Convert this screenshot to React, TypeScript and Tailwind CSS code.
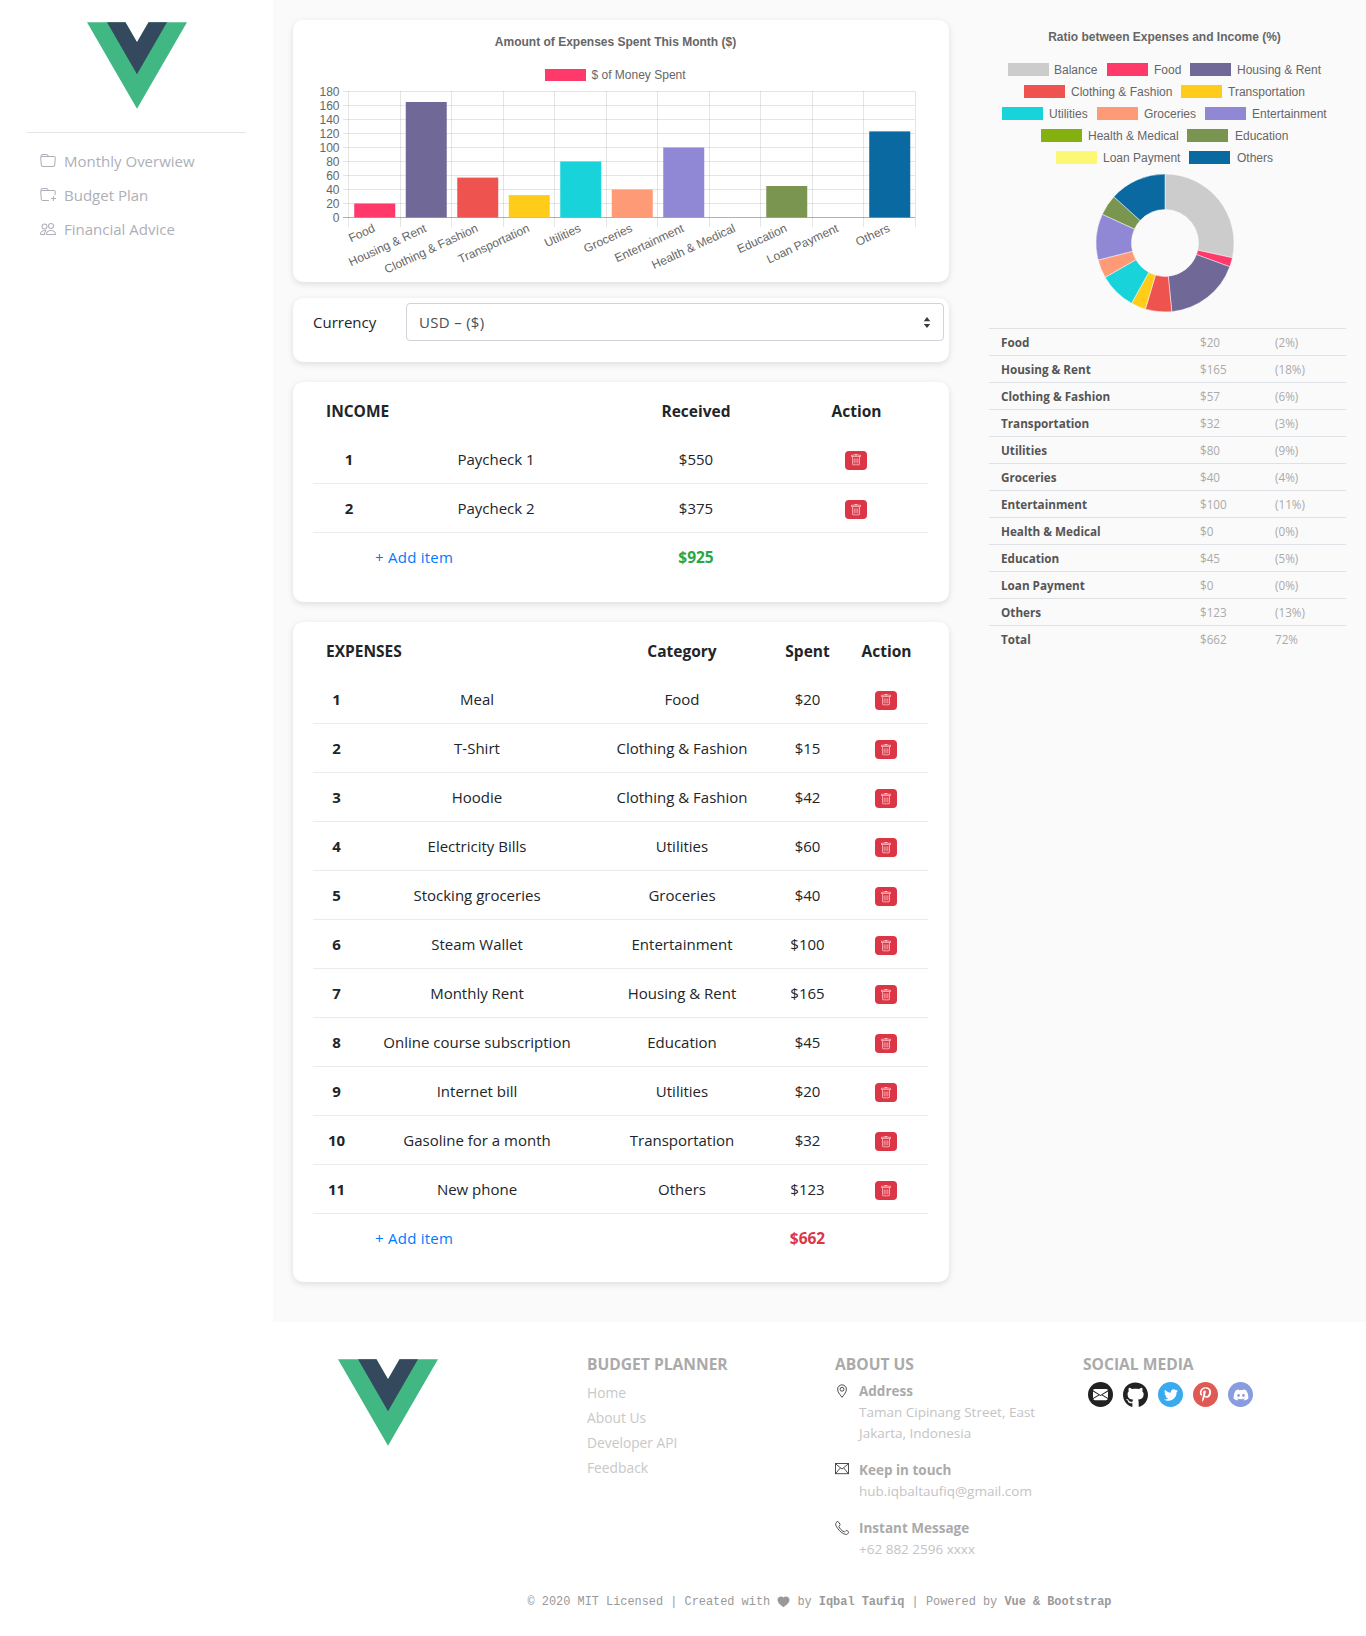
import React from "react";
import { BsFolder, BsFolderPlus, BsPeople, BsTrash, BsEnvelopeFill } from "react-icons/bs";
import { FaGithub, FaTwitter, FaPinterestP, FaDiscord } from "react-icons/fa";

const C = {
  balance: "#cccccc",
  food: "#ff3a6b",
  housing: "#706897",
  clothing: "#ef5350",
  transport: "#ffcd19",
  util: "#19d3da",
  groc: "#ff9a76",
  ent: "#9088d4",
  health: "#84b010",
  edu: "#7a9550",
  loan: "#fcf876",
  others: "#0a69a0",
};

function VueLogo() {
  return (
    <svg viewBox="0 0 261.76 226.69" className="block h-[87px] w-[100px]">
      <path d="M161.096.001l-30.225 52.351L100.647.001H-.005l130.877 226.688L261.749.001z" fill="#41b883" />
      <path d="M161.096.001l-30.225 52.351L100.647.001H52.346l78.526 136.01L209.398.001z" fill="#34495e" />
    </svg>
  );
}

const barData: [string, number, string][] = [
  ["Food", 20, C.food],
  ["Housing & Rent", 165, C.housing],
  ["Clothing & Fashion", 57, C.clothing],
  ["Transportation", 32, C.transport],
  ["Utilities", 80, C.util],
  ["Groceries", 40, C.groc],
  ["Entertainment", 100, C.ent],
  ["Health & Medical", 0, C.health],
  ["Education", 45, C.edu],
  ["Loan Payment", 0, C.loan],
  ["Others", 123, C.others],
];

function BarChart() {
  const x0 = 348;
  const step = 51.5;
  const y0 = 217.5;
  const ticks = [0, 20, 40, 60, 80, 100, 120, 140, 160, 180];
  return (
    <svg viewBox="293 20 656 262" className="block h-[262px] w-[656px] font-['Liberation_Sans',Arial,sans-serif]">
      <text x="615.500" y="46" textAnchor="middle" fontSize="12" fontWeight="700" fill="#666">
        Amount of Expenses Spent This Month ($)
      </text>
      <rect x="545" y="69" width="41" height="12" fill={C.food} />
      <text x="591.500" y="79" fontSize="12" fill="#666">$ of Money Spent</text>
      {ticks.map((t) => {
        const y = y0 - (t / 20) * 14;
        return (
          <g key={t}>
            <line x1={343} x2={915} y1={y} y2={y} stroke={t === 0 ? "rgba(0,0,0,.3)" : "rgba(0,0,0,.1)"} />
            <text x="339.500" y={y + 4} textAnchor="end" fontSize="12" fill="#666">{t}</text>
          </g>
        );
      })}
      {Array.from({ length: 12 }).map((_, i) => {
        const x = Math.round(x0 + i * step) + 0.5;
        return <line key={i} x1={x} x2={x} y1={91} y2={227} stroke="rgba(0,0,0,.1)" />;
      })}
      {barData.map(([label, v, col], i) => {
        const cx = x0 + step * (i + 0.5);
        const h = (v / 20) * 14;
        return (
          <g key={label}>
            {v > 0 && <rect x={cx - 19.5} y={y0 - h} width={41} height={h} fill={col} />}
            <text x={cx + 2} y={231} textAnchor="end" fontSize="12" fill="#666" transform={`rotate(-25 ${cx + 2} 231)`}>
              {label}
            </text>
          </g>
        );
      })}
    </svg>
  );
}

const legend: [string, string, number, number, number][] = [
  ["Balance", C.balance, 1008, 1054, 63],
  ["Food", C.food, 1107, 1154, 63],
  ["Housing & Rent", C.housing, 1190, 1237, 63],
  ["Clothing & Fashion", C.clothing, 1024, 1071, 85],
  ["Transportation", C.transport, 1181, 1228, 85],
  ["Utilities", C.util, 1002, 1049, 107],
  ["Groceries", C.groc, 1097, 1144, 107],
  ["Entertainment", C.ent, 1205, 1252, 107],
  ["Health & Medical", C.health, 1041, 1088, 129],
  ["Education", C.edu, 1187, 1235, 129],
  ["Loan Payment", C.loan, 1056, 1103, 151],
  ["Others", C.others, 1189, 1237, 151],
];

const donut: [number, string][] = [
  [263, C.balance],
  [20, C.food],
  [165, C.housing],
  [57, C.clothing],
  [32, C.transport],
  [80, C.util],
  [40, C.groc],
  [100, C.ent],
  [45, C.edu],
  [123, C.others],
];

function Donut() {
  const cx = 1165;
  const cy = 243;
  const R = 69;
  const r = 33.5;
  let a = -Math.PI / 2;
  const segs = donut.map(([v, col]) => {
    const b = a + (v / 925) * Math.PI * 2;
    const p = (rad: number, ang: number) => `${cx + rad * Math.cos(ang)} ${cy + rad * Math.sin(ang)}`;
    const large = b - a > Math.PI ? 1 : 0;
    const d = `M${p(R, a)}A${R} ${R} 0 ${large} 1 ${p(R, b)}L${p(r, b)}A${r} ${r} 0 ${large} 0 ${p(r, a)}Z`;
    a = b;
    return <path key={col} d={d} fill={col} stroke="#fafafa" strokeWidth="0.5" />;
  });
  return <g>{segs}</g>;
}

function DonutChart() {
  return (
    <svg viewBox="989 20 357 308" className="block h-[308px] w-[357px] font-['Liberation_Sans',Arial,sans-serif]">
      <text x="1164.500" y="41" textAnchor="middle" fontSize="12" fontWeight="700" fill="#666">
        Ratio between Expenses and Income (%)
      </text>
      {legend.map(([label, col, bx, tx, y]) => (
        <g key={label}>
          <rect x={bx} y={y} width="41" height="13" fill={col} />
          <text x={tx} y={y + 10.5} fontSize="12" fill="#666">{label}</text>
        </g>
      ))}
      <Donut />
    </svg>
  );
}

const summary: [string, string, string][] = [
  ["Food", "$20", "(2%)"],
  ["Housing & Rent", "$165", "(18%)"],
  ["Clothing & Fashion", "$57", "(6%)"],
  ["Transportation", "$32", "(3%)"],
  ["Utilities", "$80", "(9%)"],
  ["Groceries", "$40", "(4%)"],
  ["Entertainment", "$100", "(11%)"],
  ["Health & Medical", "$0", "(0%)"],
  ["Education", "$45", "(5%)"],
  ["Loan Payment", "$0", "(0%)"],
  ["Others", "$123", "(13%)"],
  ["Total", "$662", "72%"],
];

const expenses: [string, string, string][] = [
  ["Meal", "Food", "$20"],
  ["T-Shirt", "Clothing & Fashion", "$15"],
  ["Hoodie", "Clothing & Fashion", "$42"],
  ["Electricity Bills", "Utilities", "$60"],
  ["Stocking groceries", "Groceries", "$40"],
  ["Steam Wallet", "Entertainment", "$100"],
  ["Monthly Rent", "Housing & Rent", "$165"],
  ["Online course subscription", "Education", "$45"],
  ["Internet bill", "Utilities", "$20"],
  ["Gasoline for a month", "Transportation", "$32"],
  ["New phone", "Others", "$123"],
];

function TrashBtn() {
  return (
    <span className="mr-[2px] inline-flex h-[19px] w-[22px] items-center justify-center rounded-[4px] bg-[#dc3545] align-middle text-[#ffc9ce]">
      <BsTrash size={12} />
    </span>
  );
}

function Card({ className, children }: { className?: string; children: React.ReactNode }) {
  return <div className={`rounded-[10px] bg-white shadow-[0_2px_6px_rgba(0,0,0,0.12)] ${className ?? ""}`}>{children}</div>;
}

function AddItem() {
  return <span className="tracking-[0.25px] text-[#007bff]">+ Add item</span>;
}

function IncomeCard() {
  return (
    <Card className="mt-5 px-5 pt-[5px] pb-5">
      <table className="w-[615px] table-fixed text-center">
        <colgroup>
          <col className="w-[72px]" />
          <col className="w-[222px]" />
          <col className="w-[178px]" />
          <col className="w-[143px]" />
        </colgroup>
        <thead>
          <tr className="h-[47px] text-[15.500px] font-bold">
            <th colSpan={2} className="pt-[2px] pr-3 pl-[13px] text-left">INCOME</th>
            <th className="pt-[2px]">Received</th>
            <th className="pt-[2px]">Action</th>
          </tr>
        </thead>
        <tbody>
          {[["1", "Paycheck 1", "$550"], ["2", "Paycheck 2", "$375"]].map(([n, name, amt]) => (
            <tr key={n} className="h-[49px] border-b border-[#e9ecef]">
              <td className="pt-[2px] font-bold">{n}</td>
              <td className="pt-[2px]">{name}</td>
              <td className="pt-[2px]">{amt}</td>
              <td className="pt-[1px]"><TrashBtn /></td>
            </tr>
          ))}
          <tr className="h-[50px]">
            <td colSpan={2} className="pl-[62px] text-left"><AddItem /></td>
            <td className="pt-[1px] text-[15.500px] font-bold text-[#28a745]">$925</td>
            <td />
          </tr>
        </tbody>
      </table>
    </Card>
  );
}

function ExpensesCard() {
  return (
    <Card className="mt-5 px-5 pt-[5px] pb-5">
      <table className="w-[615px] table-fixed text-center">
        <colgroup>
          <col className="w-[47px]" />
          <col className="w-[234px]" />
          <col className="w-[176px]" />
          <col className="w-[75px]" />
          <col className="w-[83px]" />
        </colgroup>
        <thead>
          <tr className="h-[47px] text-[15.500px] font-bold">
            <th colSpan={2} className="pt-[2px] pr-3 pl-[13px] text-left">EXPENSES</th>
            <th className="pt-[2px]">Category</th>
            <th className="pt-[2px]">Spent</th>
            <th className="pt-[2px]">Action</th>
          </tr>
        </thead>
        <tbody>
          {expenses.map(([name, cat, amt], i) => (
            <tr key={name} className="h-[49px] border-b border-[#e9ecef]">
              <td className="pt-[2px] font-bold">{i + 1}</td>
              <td className="pt-[2px]">{name}</td>
              <td className="pt-[2px]">{cat}</td>
              <td className="pt-[2px]">{amt}</td>
              <td className="pt-[1px]"><TrashBtn /></td>
            </tr>
          ))}
          <tr className="h-[49px]">
            <td colSpan={2} className="pl-[62px] text-left"><AddItem /></td>
            <td />
            <td className="pt-[1px] text-[15.500px] font-bold text-[#dc3545]">$662</td>
            <td />
          </tr>
        </tbody>
      </table>
    </Card>
  );
}

function PinIcon() {
  return (
    <svg viewBox="0 0 16 16" className="h-[14px] w-[14px]" fill="none" stroke="#333" strokeWidth="1">
      <path d="M8 15.2C5.4 11.8 3 9.2 3 6a5 5 0 0 1 10 0c0 3.2-2.4 5.8-5 9.2z" />
      <circle cx="8" cy="6" r="2.2" />
    </svg>
  );
}

function MailIcon() {
  return (
    <svg viewBox="0 0 16 14" className="h-[12px] w-[14px]" fill="none" stroke="#333" strokeWidth="1">
      <rect x="0.5" y="0.5" width="15" height="12" />
      <path d="M.5 1 8 7l7.5-6M.5 12.5 6 5.8M15.5 12.5 10 5.8" />
    </svg>
  );
}

function PhoneIcon() {
  return (
    <svg viewBox="0 0 16 16" className="h-[14px] w-[14px]" fill="none" stroke="#333" strokeWidth="1">
      <path d="M3.6.8 5.6 3.4c.4.5.3 1-.1 1.5l-.9.9c-.2.2-.2.5-.1.8.6 1.5 3.3 5 6.1 5.7.3.1.6 0 .8-.2l.9-.9c.4-.4 1-.5 1.5-.2l1.4 1c.6.4.7 1.2.2 1.7l-1 1c-.6.6-1.4.8-2.2.6C9 14.700 5.400 11.900 3 8.500 1.800 6.800 1 5.300.8 4.300.6 3.400.9 2.500 1.500 1.900L2 .9C2.400.4 3.200.3 3.600.8z" />
    </svg>
  );
}

function Contact({ icon, title, lines }: { icon: React.ReactNode; title: string; lines: string[] }) {
  return (
    <div className="relative pl-6 text-[13.500px] leading-[21px]">
      <span className="absolute top-[3px] left-0 flex w-[14px] justify-center">{icon}</span>
      <div className="font-bold text-[#aaa]">{title}</div>
      {lines.map((l) => (
        <div key={l} className="text-[#c4c4c4]">{l}</div>
      ))}
    </div>
  );
}

function Social({ bg, children }: { bg: string; children: React.ReactNode }) {
  return <span className={`flex h-[25px] w-[25px] items-center justify-center rounded-full text-white ${bg}`}>{children}</span>;
}

function Footer() {
  return (
    <footer className="h-[314px] bg-white">
      <div className="ml-[338px] grid grid-cols-[249px_248px_248px_1fr] pt-[30px]">
        <div className="pt-[7px]"><VueLogo /></div>
        <div>
          <h4 className="text-[15.600px] leading-[24px] font-bold text-[#aaa]">BUDGET PLANNER</h4>
          <ul className="mt-[4px] text-[13.800px] leading-[25px] text-[#c8c8c8]">
            <li>Home</li>
            <li>About Us</li>
            <li>Developer API</li>
            <li>Feedback</li>
          </ul>
        </div>
        <div>
          <h4 className="text-[15.600px] leading-[24px] font-bold text-[#aaa]">ABOUT US</h4>
          <div className="mt-[5px] flex flex-col gap-[16px]">
            <Contact icon={<PinIcon />} title="Address" lines={["Taman Cipinang Street, East", "Jakarta, Indonesia"]} />
            <Contact icon={<MailIcon />} title="Keep in touch" lines={["hub.iqbaltaufiq@gmail.com"]} />
            <Contact icon={<PhoneIcon />} title="Instant Message" lines={["+62 882 2596 xxxx"]} />
          </div>
        </div>
        <div>
          <h4 className="text-[15.600px] leading-[24px] font-bold text-[#aaa]">SOCIAL MEDIA</h4>
          <div className="mt-[6px] ml-[5px] flex gap-[10px]">
            <Social bg="bg-[#222]"><BsEnvelopeFill size={15} /></Social>
            <span className="flex h-[25px] w-[25px] items-center justify-center text-[#222]"><FaGithub size={26} /></span>
            <Social bg="bg-[#3aaaf0]"><FaTwitter size={14} /></Social>
            <Social bg="bg-[#e05a55]"><FaPinterestP size={15} /></Social>
            <Social bg="bg-[#8a9ce0]"><FaDiscord size={16} /></Social>
          </div>
        </div>
      </div>
      <div className="mt-[33px] ml-[273px] flex items-center justify-center font-['Liberation_Mono',monospace] text-[11.900px] leading-[18px] text-[#999]">
        <span className="whitespace-pre">© 2020 MIT Licensed | Created with </span>
        <svg viewBox="0 0 16 16" className="h-[13px] w-[13px] -translate-y-px" fill="#999">
          <path d="M8 15C-6 6.500 3.500-1.500 8 3c4.500-4.500 14 3.500 0 12z" />
        </svg>
        <span className="whitespace-pre"> by <b>Iqbal Taufiq</b> | Powered by <b>Vue &amp; Bootstrap</b></span>
      </div>
    </footer>
  );
}

export default function App() {
  return (
    <div className="w-[1366px] font-['Open_Sans','Noto_Sans',sans-serif] text-[15px] text-[#212529]">
      <div className="flex">
        <aside className="w-[273px] shrink-0 bg-white">
          <div className="flex justify-center pt-[22px] pl-[1px]"><VueLogo /></div>
          <div className="mx-[27px] mt-[23px] border-t border-[#e5e5e5]" />
          <nav className="mt-[11px] flex flex-col pl-[40px] leading-[34px] text-[#adb0b8]">
            <div className="flex items-center gap-[8px]"><BsFolder size={16} />Monthly Overwiew</div>
            <div className="flex items-center gap-[8px]"><BsFolderPlus size={16} />Budget Plan</div>
            <div className="flex items-center gap-[8px]"><BsPeople size={16} />Financial Advice</div>
          </nav>
        </aside>
        <main className="flex h-[1322px] flex-1 gap-[40px] bg-[#fafafa] pt-5 pl-5">
          <div className="w-[656px] shrink-0">
            <Card><BarChart /></Card>
            <Card className="mt-4 flex h-[64px] items-start pt-[5px] pr-[5px] pl-[20px]">
              <span className="w-[93px] leading-[38px]">Currency</span>
              <div className="flex h-[38px] flex-1 items-center justify-between rounded-[4px] border border-[#ced4da] pr-[12px] pl-[12px] text-[#495057]">
                <span className="tracking-[0.3px]">USD – ($)</span>
                <svg viewBox="0 0 8 12" className="h-[11px] w-[8px]" fill="#343a40">
                  <path d="M4 0 7.500 4.500H.5zM4 12 .5 7.500h7z" />
                </svg>
              </div>
            </Card>
            <IncomeCard />
            <ExpensesCard />
          </div>
          <div className="w-[357px]">
            <DonutChart />
            <table className="w-[357px] table-fixed text-[11.700px]">
              <colgroup>
                <col className="w-[199px]" />
                <col className="w-[75px]" />
                <col />
              </colgroup>
              <tbody>
                {summary.map(([a, b, c]) => (
                  <tr key={a} className="h-[27px] border-t border-[#dee2e6]">
                    <td className="pt-[1px] pl-3 font-bold text-[#555]">{a}</td>
                    <td className="pt-[1px] pl-3 text-[#aaa]">{b}</td>
                    <td className="pt-[1px] pl-3 text-[#aaa]">{c}</td>
                  </tr>
                ))}
              </tbody>
            </table>
          </div>
        </main>
      </div>
      <Footer />
    </div>
  );
}
